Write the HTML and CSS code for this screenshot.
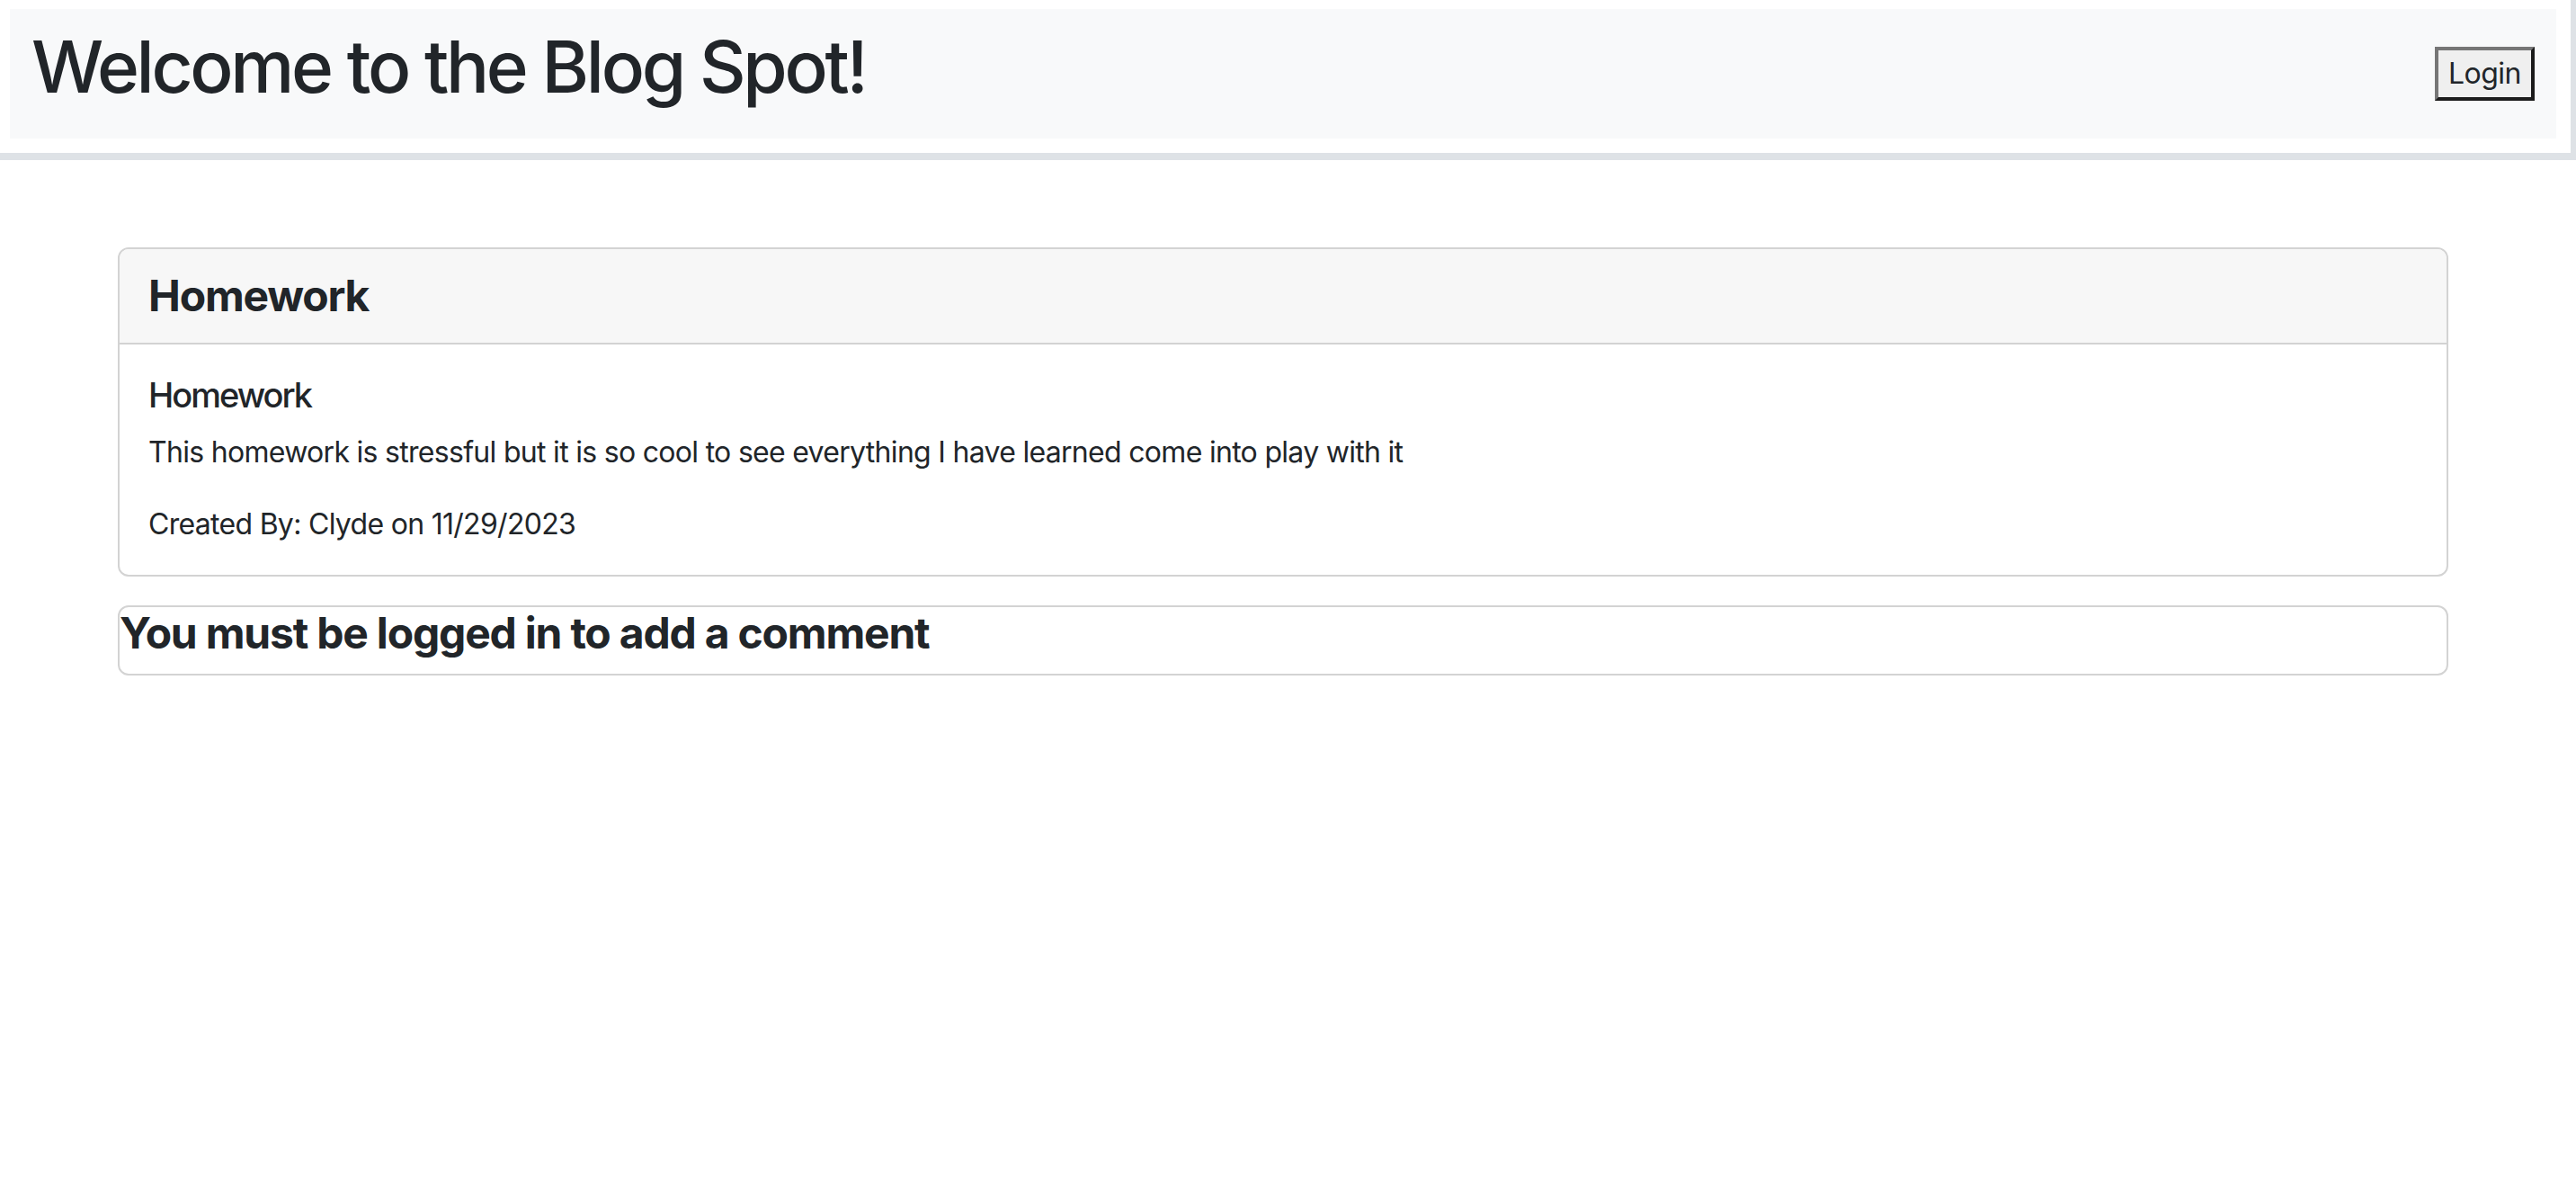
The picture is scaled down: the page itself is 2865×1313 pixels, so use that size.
FILE: index.html
```html
<!DOCTYPE html>
<html lang="en">
<head>
<meta charset="utf-8">
<title>Blog Spot</title>
<link rel="stylesheet" href="styles.css">
</head>
<body>
<header class="site-header">
  <nav class="navbar">
    <h1 class="site-title">Welcome to the Blog Spot!</h1>
    <button class="login-btn" type="button">Login</button>
  </nav>
</header>
<main class="content">
  <div class="card">
    <div class="card-header">Homework</div>
    <div class="card-body">
      <h5 class="card-title">Homework</h5>
      <p class="card-text">This homework is stressful but it is so cool to see everything I have learned come into play with it</p>
      <p class="card-meta">Created By: Clyde on 11/29/2023</p>
    </div>
  </div>
  <div class="card comment-card">
    <h4 class="comment-msg">You must be logged in to add a comment</h4>
  </div>
</main>
</body>
</html>
```
FILE: styles.css
```css
* { box-sizing: border-box; }
html, body { margin: 0; padding: 0; }
body {
  font-family: Inter, "Noto Sans", "Liberation Sans", sans-serif;
  font-size: 32px;
  line-height: 1.5;
  color: #212529;
  background: #fff;
}
.site-header {
  background: #fff;
  padding: 10px 16px 16px 11px;
  border-right: 6px solid #dee2e6;
  border-bottom: 8px solid #dee2e6;
}
.navbar {
  background: #f8f9fa;
  padding: 16px 24px;
  display: flex;
  align-items: center;
  justify-content: space-between;
}
.site-title {
  margin: 0 0 16px 0;
  font-size: 80px;
  font-weight: 500;
  line-height: 1.2;
  letter-spacing: -3.3px;
}
.login-btn {
  font-family: inherit;
  font-size: 32px;
  line-height: 48px;
  color: #212529;
  background: #efefef;
  padding: 2px 11px;
  border-width: 4px;
  border-style: solid;
  border-color: #767676 #1b1b1b #1b1b1b #767676;
  letter-spacing: -0.5px;
}
.content {
  margin: 97px 142px 0 131px;
}
.card {
  border: 2px solid #d3d3d3;
  border-radius: 12px;
  background: #fff;
  overflow: hidden;
}
.card-header {
  background: #f7f7f7;
  border-bottom: 2px solid #d3d3d3;
  padding: 16px 32px;
  font-size: 48px;
  font-weight: 700;
  line-height: 1.5;
  letter-spacing: -1.2px;
}
.card-body {
  padding: 32px;
}
.card-title {
  margin: 0 0 16px 0;
  font-size: 38px;
  font-weight: 500;
  line-height: 48px;
  letter-spacing: -2px;
}
.card-text {
  margin: 0 0 32px 0;
  letter-spacing: -0.7px;
}
.card-meta {
  margin: 0;
  letter-spacing: -0.7px;
}
.comment-card {
  margin-top: 32px;
}
.comment-msg {
  margin: 0 0 16px 0;
  font-size: 48px;
  font-weight: 700;
  line-height: 1.2;
  letter-spacing: -1.2px;
}
```
